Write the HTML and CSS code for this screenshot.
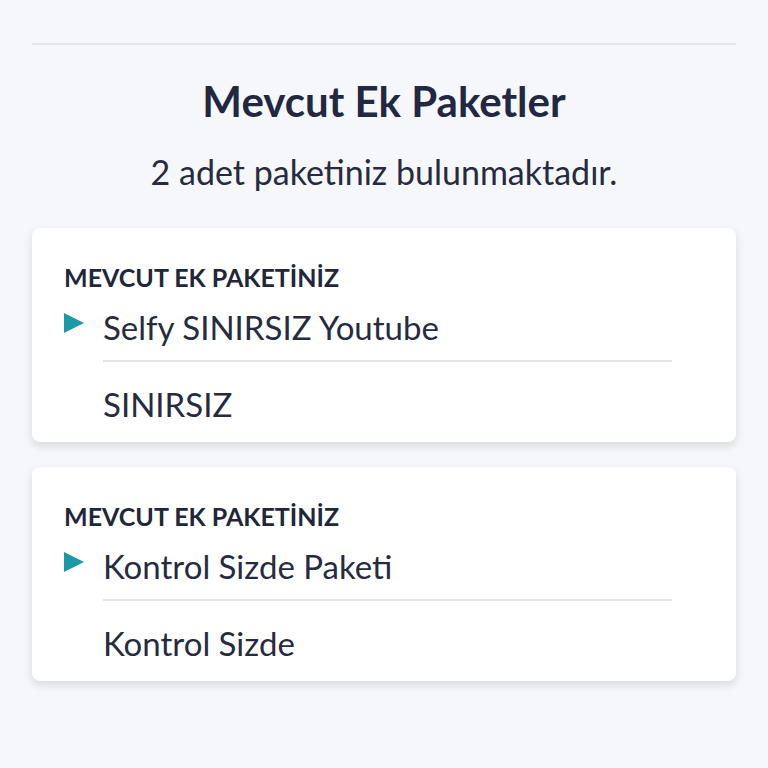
FILE: index.html
```html
<!DOCTYPE html>
<html lang="tr">
  <head>
    <meta charset="utf-8">
    <link rel="stylesheet" href="styles.css">
  </head>
  <body>
    <div class="page">
      <hr class="top-line">

      <h1 class="title">Mevcut Ek Paketler</h1>
      <p class="subtitle">2 adet paketiniz bulunmaktadır.</p>

      <div class="card">
        <div class="card-label">MEVCUT EK PAKETİNİZ</div>
        <div class="pack">
          <span class="arrow"></span>
          <div class="pack-body">
            <div class="pack-name">Selfy SINIRSIZ Youtube</div>
            <div class="pack-value">SINIRSIZ</div>
          </div>
        </div>
      </div>

      <div class="card">
        <div class="card-label">MEVCUT EK PAKETİNİZ</div>
        <div class="pack">
          <span class="arrow"></span>
          <div class="pack-body">
            <div class="pack-name">Kontrol Sizde Paketi</div>
            <div class="pack-value">Kontrol Sizde</div>
          </div>
        </div>
      </div>
    </div>
  </body>
</html>
```
FILE: styles.css
```css
html, body {
  margin: 0;
  background: #f5f7fa;
}
body {
  font-family: Lato, "Open Sans", sans-serif;
  color: #272b3f;
}
.page {
  padding: 43px 32px 24px;
}
.top-line {
  border: none;
  height: 2px;
  background: #e3e5e9;
  margin: 0;
}
.title {
  text-align: center;
  font-size: 42px;
  font-weight: 700;
  color: #232842;
  margin: 32px 0 0;
  line-height: 48px;
}
.subtitle {
  text-align: center;
  font-size: 34px;
  margin: 27px 0 0;
  line-height: 40px;
}
.card {
  background: white;
  border-radius: 8px;
  box-shadow: 0 4px 10px rgba(0, 0, 0, 0.12);
  padding: 34px 64px 18px 32px;
  margin-top: 36px;
}
.card + .card {
  margin-top: 25px;
}
.card-label {
  font-size: 25px;
  font-weight: 700;
  line-height: 30px;
  color: #22263a;
}
.pack {
  display: flex;
  margin-top: 15px;
}
.arrow {
  flex: none;
  width: 0;
  height: 0;
  border-top: 10px solid transparent;
  border-bottom: 10px solid transparent;
  border-left: 20px solid #1a9aa7;
  margin: 6px 19px 0 0;
}
.pack-body {
  flex: 1;
}
.pack-name {
  font-size: 33px;
  line-height: 40px;
  padding-bottom: 13px;
  border-bottom: 2px solid #e4e5e8;
}
.pack-value {
  font-size: 33px;
  line-height: 40px;
  margin-top: 22px;
}
```
